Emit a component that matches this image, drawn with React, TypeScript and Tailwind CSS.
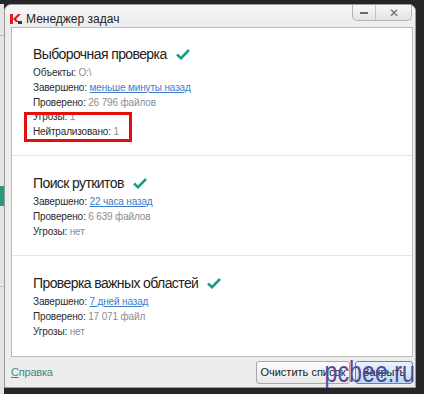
import React from "react";

type Row = { label: string; value: string; link?: boolean };

type Scan = {
  title: string;
  rows: Row[];
  marked?: boolean;
};

const scans: Scan[] = [
  {
    title: "Выборочная проверка",
    marked: true,
    rows: [
      { label: "Объекты:", value: "O:\\" },
      { label: "Завершено:", value: "меньше минуты назад", link: true },
      { label: "Проверено:", value: "26 796 файлов" },
      { label: "Угрозы:", value: "1" },
      { label: "Нейтрализовано:", value: "1" },
    ],
  },
  {
    title: "Поиск руткитов",
    rows: [
      { label: "Завершено:", value: "22 часа назад", link: true },
      { label: "Проверено:", value: "6 639 файлов" },
      { label: "Угрозы:", value: "нет" },
    ],
  },
  {
    title: "Проверка важных областей",
    rows: [
      { label: "Завершено:", value: "7 дней назад", link: true },
      { label: "Проверено:", value: "17 071 файл" },
      { label: "Угрозы:", value: "нет" },
    ],
  },
];

function Check() {
  return (
    <svg width="14" height="11" viewBox="0 0 14 11" className="ml-[9px] shrink-0">
      <path d="M1 5.5 5 9.2 13 1" fill="none" stroke="#169e84" strokeWidth="2.6" />
    </svg>
  );
}

function KasperskyIcon() {
  return (
    <svg width="12" height="10" viewBox="0 0 12 10" className="shrink-0">
      <path d="M0 0h3v10H0z" fill="#d81e1e" />
      <path d="M3 5 8 0h3L6 5l3 3H6z" fill="#d81e1e" />
      <path d="M8 7h4v3H8z" fill="#3a3a3a" />
    </svg>
  );
}

function ScanBlock({ scan, first }: { scan: Scan; first: boolean }) {
  return (
    <div
      className={
        first
          ? "relative h-[127px] pl-[21px] pt-[16px]"
          : "relative h-[100px] border-t border-[#e4e4e4] pl-[21px] pt-[17px]"
      }
    >
      <div className="flex h-[20px] items-center">
        <span className="text-[14px] leading-[20px] tracking-[-0.6px] text-[#222]">
          {scan.title}
        </span>
        <Check />
      </div>
      <div className="mt-[2px]">
        {scan.rows.map((r) => (
          <div key={r.label} className="text-[10px] leading-[14.75px] tracking-[-0.15px]">
            <span className="text-[#2a2a2a]">{r.label}</span>{" "}
            {r.link ? (
              <span className="text-[#3d7cc9] underline">{r.value}</span>
            ) : (
              <span className="text-[#8d8d8d]">{r.value}</span>
            )}
          </div>
        ))}
      </div>
      {/* red highlight box */}
      {scan.marked && (
        <div className="absolute left-[12px] top-[84px] h-[30px] w-[108px] border-[3px] border-[#e60d0d]" />
      )}
    </div>
  );
}

export default function App() {
  return (
    <div className="flex h-[394px] w-[424px] overflow-hidden bg-[#262626] font-['Liberation_Sans',Arial,sans-serif]">
      {/* background app peeking at the left */}
      <div className="mt-[4px] flex w-[4px] flex-col bg-[#e4e4e4]">
        <div className="mt-[31px] h-px bg-[#b5b5b5]" />
        <div className="mt-[150px] h-[20px] bg-[#2a9a7e]" />
        <div className="mt-[80px] h-px bg-[#c5c5c5]" />
      </div>

      {/* window */}
      <div className="relative mt-[4px] flex h-[384px] w-[412px] flex-col rounded-t-[7px] border border-[#9c9c9c] bg-[#ececec]">
        {/* title bar */}
        <div className="flex h-[22px] items-start rounded-t-[6px] bg-gradient-to-b from-[#f6f6f6] to-[#ececec]">
          <div className="ml-[5px] mt-[7px] flex items-center gap-[4px]">
            <KasperskyIcon />
            <span className="text-[12px] leading-[14px] text-[#222]">Менеджер задач</span>
          </div>
          <div className="ml-auto mr-[3px] flex h-[16px] overflow-hidden rounded-b-[5px] border border-t-0 border-[#b3b3b3] bg-gradient-to-b from-[#fafafa] to-[#e2e2e2]">
            <div className="flex w-[23px] items-center justify-center border-r border-[#c4c4c4]">
              <div className="h-[2px] w-[8px] bg-[#6a6a6a]" />
            </div>
            <div className="flex w-[35px] items-center justify-center text-[12px] leading-none text-[#6a6a6a]">
              ✕
            </div>
          </div>
        </div>

        {/* content panel */}
        <div className="ml-[6px] mr-[2px] flex h-[330px] flex-col border border-[#bcbcbc] bg-white">
          {scans.map((s, i) => (
            <ScanBlock key={s.title} scan={s} first={i === 0} />
          ))}
        </div>

        {/* footer */}
        <div className="relative ml-[6px] mr-[2px] flex flex-1 items-center">
          <span className="text-[11px] tracking-[-0.2px] text-[#3e8d7c]">
            <span className="underline">С</span>правка
          </span>
          <div className="ml-auto flex gap-[5px]">
            <button className="h-[23px] w-[94px] rounded-[3px] border border-[#a9a9a9] bg-gradient-to-b from-[#fdfdfd] to-[#e6e6e6] text-[11px] text-[#222]">
              Очистить список
            </button>
            <button className="h-[23px] w-[58px] rounded-[3px] border border-[#4a8cc0] bg-gradient-to-b from-[#e8f4fc] to-[#b7dcf4] text-[11px] text-[#222]">
              Закрыть
            </button>
          </div>
          {/* watermark */}
          <span className="pointer-events-none absolute right-[-2px] top-[-3px] origin-right scale-x-[0.8] text-[29px] leading-[36px] text-[#56479b]">
            pcbee.ru
          </span>
        </div>
      </div>
    </div>
  );
}
